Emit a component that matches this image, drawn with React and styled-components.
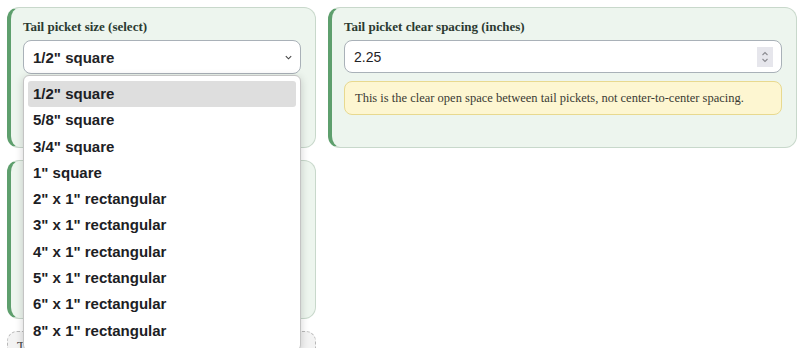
import React from "react";
import styled, { createGlobalStyle } from "styled-components";

const Global = createGlobalStyle`
    html, body {
        margin: 0;
        padding: 0;
        background: #ffffff;
        overflow: hidden;
    }
    body {
        padding: 7px 4px 0 7px;
        font-family: "Liberation Sans", Arial, sans-serif;
    }
`

const Grid = styled.div `
    display: grid;
    grid-template-columns: 309px 1fr;
    column-gap: 12px;
    row-gap: 12px;
    align-items: stretch;
`

const Card = styled.section `
    position: relative;
    background: #edf5ee;
    border: 1px solid #c8d8cb;
    border-left: 4px solid #5e9f6d;
    border-radius: 12px;
    padding: 11px 14px 16px 12px;
    min-height: ${(p) => p.$minH || 0}px;
    box-sizing: border-box;
`

const Label = styled.div `
    font-family: "Liberation Serif", "Times New Roman", serif;
    font-weight: bold;
    font-size: 13px;
    color: #2b3a31;
    margin-bottom: 6px;
    line-height: 15px;
`

const SelectWrap = styled.div `
    position: relative;
`

const SelectBox = styled.div `
    height: 34px;
    box-sizing: border-box;
    background: #fff;
    border: 1px solid #a9b1b8;
    border-radius: 8px;
    display: flex;
    align-items: center;
    justify-content: space-between;
    padding: 0 7px 0 9px;
    font-weight: bold;
    font-size: 15px;
    color: #1f2326;
`

const Chevron = styled.svg `
    width: 9px;
    height: 9px;
    stroke: #444;
    fill: none;
    stroke-width: 1.2;
`

const Menu = styled.ul `
    position: absolute;
    top: 35px;
    left: 0;
    width: 278px;
    margin: 0;
    padding: 5px 4px 6px;
    list-style: none;
    box-sizing: border-box;
    background: #fff;
    border: 1px solid #c4c4c4;
    border-radius: 6px;
    box-shadow: 0 2px 8px rgba(0, 0, 0, 0.18);
    z-index: 10;
`

const Option = styled.li `
    height: 26.3px;
    line-height: 26.3px;
    padding-left: 5px;
    border-radius: 3px;
    font-weight: bold;
    font-size: 15px;
    color: #1c2024;
    background: ${(p) => (p.$active ? "#dedede" : "transparent")};
`

const InputBox = styled.div `
    height: 33px;
    box-sizing: border-box;
    background: #fff;
    border: 1px solid #a9b1b8;
    border-radius: 8px;
    display: flex;
    align-items: center;
    justify-content: space-between;
    padding: 0 8px 0 9px;
    font-size: 14px;
    color: #1f2326;
`

const Spinner = styled.div `
    width: 16px;
    height: 20px;
    background: #e6e6ec;
    display: flex;
    align-items: center;
    justify-content: center;
`

const Note = styled.div `
    margin-top: 8px;
    background: #fdf6d1;
    border: 1px solid #e8d98f;
    border-radius: 8px;
    padding: 9px 10px 9px;
    font-family: "Liberation Serif", "Times New Roman", serif;
    font-size: 12.5px;
    color: #3a3a33;
    line-height: 14px;
`

const Dashed = styled.div `
    height: 30px;
    box-sizing: border-box;
    border: 1px dashed #b9b9b9;
    border-radius: 10px;
    background: #f3f3f3;
    padding: 6px 9px;
    font-family: "Liberation Serif", "Times New Roman", serif;
    font-size: 13px;
    color: #444;
`

const options = [
    '1/2" square',
    '5/8" square',
    '3/4" square',
    '1" square',
    '2" x 1" rectangular',
    '3" x 1" rectangular',
    '4" x 1" rectangular',
    '5" x 1" rectangular',
    '6" x 1" rectangular',
    '8" x 1" rectangular',
];

export default function App() {
    return (
        <>
            <Global />
            <Grid>
                <Card $minH={141}>
                    <Label>Tail picket size (select)</Label>
                    <SelectWrap>
                        <SelectBox>
                            <span>1/2" square</span>
                            <Chevron viewBox="0 0 10 10">
                                <path d="M2 3.5 L5 6.5 L8 3.5" />
                            </Chevron>
                        </SelectBox>
                        <Menu>
                            {options.map((o, i) => (
                                <Option key={o} $active={i === 0}>{o}</Option>
                            ))}
                        </Menu>
                    </SelectWrap>
                </Card>

                <Card>
                    <Label>Tail picket clear spacing (inches)</Label>
                    <InputBox>
                        <span>2.25</span>
                        <Spinner>
                            <svg width="10" height="16" viewBox="0 0 10 16" fill="none" stroke="#8a8a90" strokeWidth="1.1">
                                <path d="M2.5 6 L5 3.5 L7.5 6" />
                                <path d="M2.5 10 L5 12.5 L7.5 10" />
                            </svg>
                        </Spinner>
                    </InputBox>
                    <Note>This is the clear open space between tail pickets, not center-to-center spacing.</Note>
                </Card>

                <Card $minH={159} />
                <div />

                <Dashed>T</Dashed>
            </Grid>
        </>
    )
};
